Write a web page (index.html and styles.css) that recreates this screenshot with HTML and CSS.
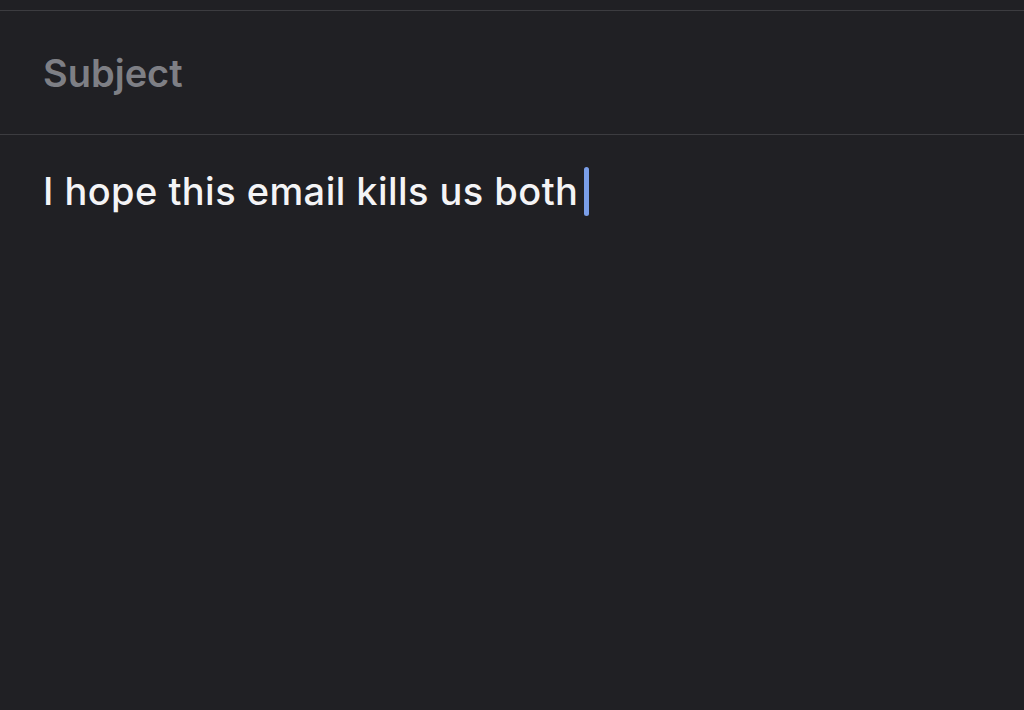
FILE: index.html
```html
<!DOCTYPE html>
<html>
<head>
<meta charset="utf-8">
<link rel="stylesheet" href="styles.css">
</head>
<body>
<div class="screen">
  <div class="top-strip"></div>
  <div class="subject-row"><span class="subject">Subject</span></div>
  <div class="body-area">
    <span class="body-text">I hope this email kills us both</span><span class="cursor"></span>
  </div>
</div>
</body>
</html>
```
FILE: styles.css
```css
html, body {
  margin: 0;
  padding: 0;
  background: #202024;
}
.screen {
  width: 1024px;
  height: 710px;
  background: #202024;
  font-family: Inter, "Noto Sans", sans-serif;
  overflow: hidden;
}
.top-strip {
  height: 10px;
  border-bottom: 1px solid #3c3c40;
}
.subject-row {
  height: 123px;
  border-bottom: 1px solid #3c3c40;
  display: flex;
  align-items: center;
  padding-left: 43px;
}
.subject {
  color: #7e7f85;
  font-size: 38px;
  font-weight: 600;
  letter-spacing: 0;
}
.body-area {
  display: flex;
  align-items: center;
  padding-left: 43px;
  padding-top: 31px;
}
.body-text {
  color: #f4f4f6;
  font-size: 38px;
  font-weight: 500;
  letter-spacing: 0.45px;
  line-height: 50px;
}
.cursor {
  display: inline-block;
  width: 5px;
  height: 49px;
  border-radius: 2.5px;
  background: #7a9ee8;
  margin-left: 6px;
}
```
